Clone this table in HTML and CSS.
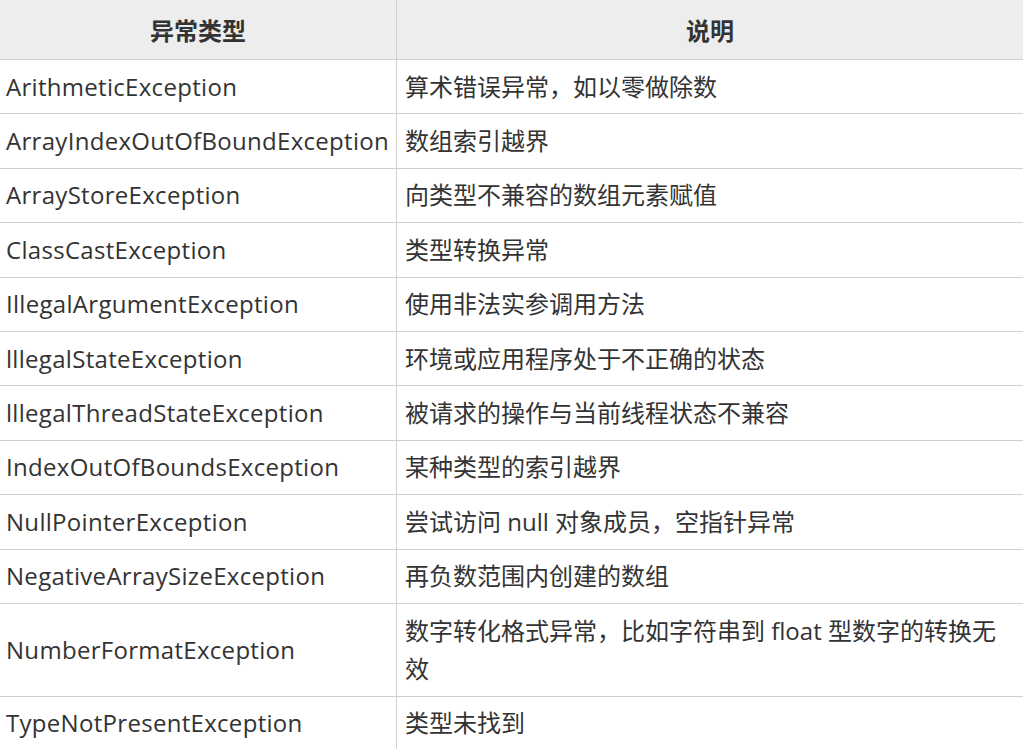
FILE: index.html
```html
<!DOCTYPE html>
<html lang="zh-CN">
<head>
<meta charset="utf-8">
<title>异常类型</title>
<link rel="stylesheet" href="styles.css">
</head>
<body>
<table class="ex-table">
  <thead>
    <tr><th class="c-name">异常类型</th><th class="c-desc">说明</th></tr>
  </thead>
  <tbody>
    <tr><td class="c-name">ArithmeticException</td><td class="c-desc">算术错误异常，如以零做除数</td></tr>
    <tr><td class="c-name">ArrayIndexOutOfBoundException</td><td class="c-desc">数组索引越界</td></tr>
    <tr><td class="c-name">ArrayStoreException</td><td class="c-desc">向类型不兼容的数组元素赋值</td></tr>
    <tr><td class="c-name">ClassCastException</td><td class="c-desc">类型转换异常</td></tr>
    <tr><td class="c-name">IllegalArgumentException</td><td class="c-desc">使用非法实参调用方法</td></tr>
    <tr><td class="c-name">lllegalStateException</td><td class="c-desc">环境或应用程序处于不正确的状态</td></tr>
    <tr><td class="c-name">lllegalThreadStateException</td><td class="c-desc">被请求的操作与当前线程状态不兼容</td></tr>
    <tr><td class="c-name">IndexOutOfBoundsException</td><td class="c-desc">某种类型的索引越界</td></tr>
    <tr><td class="c-name">NullPointerException</td><td class="c-desc">尝试访问 null 对象成员，空指针异常</td></tr>
    <tr><td class="c-name">NegativeArraySizeException</td><td class="c-desc">再负数范围内创建的数组</td></tr>
    <tr><td class="c-name">NumberFormatException</td><td class="c-desc">数字转化格式异常，比如字符串到 float 型数字的转换无效</td></tr>
    <tr><td class="c-name">TypeNotPresentException</td><td class="c-desc">类型未找到</td></tr>
  </tbody>
</table>
</body>
</html>
```

FILE: styles.css
```css
html, body {
  margin: 0;
  padding: 0;
  background: #ffffff;
}

.ex-table {
  width: 1023px;
  border-collapse: collapse;
  table-layout: fixed;
  font-family: "Open Sans", "Noto Sans CJK SC", sans-serif;
  font-size: 24px;
  line-height: 38.4px;
  color: #333333;
}

.ex-table th,
.ex-table td {
  border-bottom: 1px solid #cfcfcf;
  text-align: left;
  vertical-align: middle;
  padding: 7.5px 8px 7.5px 8px;
}

.ex-table th {
  background: #ededed;
  font-weight: bold;
  text-align: center;
  padding-top: 12px;
  padding-bottom: 8.6px;
}

.c-name {
  width: 380px;
  border-right: 1px solid #cfcfcf;
}

.ex-table td.c-name {
  padding-left: 6px;
  letter-spacing: 0.3px;
}

.ex-table td.c-desc {
  padding-left: 8px;
}
```
